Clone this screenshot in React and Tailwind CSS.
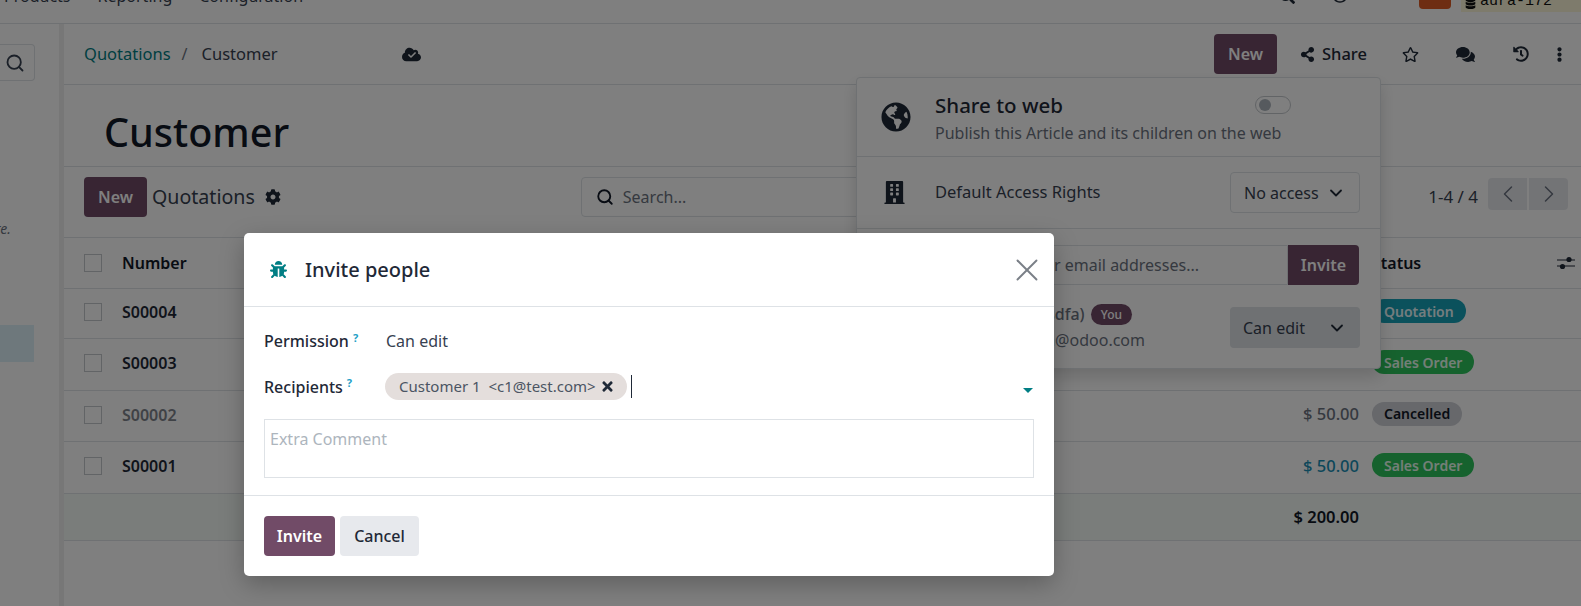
import React from 'react';
import { ChevronDown, ChevronLeft, ChevronRight, Search, X } from 'lucide-react';
import {
  FaBug,
  FaBuilding,
  FaCheck,
  FaCloud,
  FaCog,
  FaComments,
  FaDatabase,
  FaEllipsisV,
  FaGlobeAmericas,
  FaHistory,
  FaRegStar,
  FaSearch,
  FaShareAlt,
  FaTimes,
  FaRegClock,
} from 'react-icons/fa';

const rows = [
  { number: 'S00004', amount: '', status: 'Quotation', badge: 'bg-[#17a2b8] text-[#e8fbff]', height: 'h-[50px]' },
  { number: 'S00003', amount: '', status: 'Sales Order', badge: 'bg-[#2dc45c] text-[#e8fff0]', height: 'h-[52px]' },
  { number: 'S00002', amount: '$ 50.00', status: 'Cancelled', badge: 'bg-[#ced0d6] text-[#111827]', height: 'h-[51px]', muted: true },
  { number: 'S00001', amount: '$ 50.00', status: 'Sales Order', badge: 'bg-[#2dc45c] text-[#e8fff0]', height: 'h-[52px]', info: true },
];

const Checkbox = () => <div className="w-[18px] h-[18px] border border-[#c4c8cc] bg-white" />;

const Hint = () => <sup className="ml-1 text-[11px] font-bold text-[#1f9fc7]">?</sup>;

const SettingsAdjust = () => (
  <svg width="18" height="14" viewBox="0 0 18 14" className="text-[#1f2937]">
    <path d="M0 4h18M0 10h18" stroke="currentColor" strokeWidth="1.2" />
    <circle cx="12" cy="3.5" r="2.6" fill="currentColor" />
    <circle cx="5.5" cy="10.5" r="2.6" fill="currentColor" />
  </svg>
);

const TopBar = () => (
  <div className="h-6 shrink-0 border-b border-[#dee2e6] flex items-end overflow-hidden text-[#374151]">
    <div className="flex gap-[27px] pl-1 pb-[15px]">
      <span>Products</span>
      <span>Reporting</span>
      <span>Configuration</span>
    </div>
    <div className="ml-auto flex items-start self-start h-[20px] -mt-[10px]">
      <FaSearch className="mt-[-2px] mr-[37px] text-[16px] text-[#1f2937]" />
      <FaRegClock className="mt-[-3px] mr-[37px] text-[16px] text-[#1f2937]" />
      <FaComments className="mt-[-5px] mr-[17px] text-[17px] text-[#6b7280]" />
      <div className="w-8 h-[19px] bg-[#dc5a24] rounded-b mr-[10px]" />
      <div className="w-[120px] h-[22px] bg-[#fcf6d8] flex items-end pl-1 gap-1 font-['Liberation_Mono',monospace] text-[15px] leading-[20px] text-[#111]">
        <FaDatabase className="text-[11px] mb-[3px]" />
        <span>aura-172</span>
      </div>
    </div>
  </div>
);

const Sidebar = () => (
  <aside className="relative w-[64px] shrink-0 border-r-[5px] border-[#eeeeee] pt-[20px]">
    <div className="h-[37px] w-[35px] border border-[#dee2e6] border-l-0 rounded-r flex items-center justify-end pr-[9px]">
      <Search size={20} strokeWidth={2.2} className="text-[#374151]" />
    </div>
    <div className="mt-[138px] h-5 text-sm italic text-[#6b7280] leading-5 -ml-[5px]">re.</div>
    <div className="mt-[86px] h-[37px] w-[34px] bg-[#dcf1f8]" />
  </aside>
);

const Header = () => (
  <div className="h-[61px] shrink-0 border-b border-[#dee2e6] flex items-center pl-[20px] pr-[14px]">
    <span className="text-[#017e84] text-[16.5px]">Quotations</span>
    <span className="mx-[11px] text-[#6b7280]">/</span>
    <span className="text-[#374151] ml-[3px] text-[16.5px]">Customer</span>
    <div className="relative ml-[124px] text-[#1f2937] text-[19px]">
      <FaCloud />
      <FaCheck className="absolute left-[6px] top-[6px] text-[8px] text-white" />
    </div>
    <div className="ml-auto flex items-center text-[#1f2937]">
      <button className="h-10 w-[63px] rounded bg-[#714b67] font-semibold text-white">New</button>
      <FaShareAlt className="ml-[23px] text-[15px]" />
      <span className="ml-[7px] font-medium text-[16.5px]">Share</span>
      <FaRegStar className="ml-[35px] text-[17px]" />
      <FaComments className="ml-[37px] text-[19px]" />
      <FaHistory className="ml-[38px] text-[16px]" />
      <FaEllipsisV className="ml-[23px] text-[15px]" />
    </div>
  </div>
);

const ControlPanel = () => (
  <div className="h-[71px] shrink-0 border-b border-[#dee2e6] flex items-center pl-[20px] pr-[13px] pb-[10px]">
    <button className="h-10 w-[63px] rounded bg-[#714b67] font-semibold text-white">New</button>
    <span className="ml-[5px] text-[19.6px] text-[#374151]">Quotations</span>
    <FaCog className="ml-[10px] text-[16px] text-[#1f2937]" />
    <div className="ml-[300px] h-10 w-[640px] border border-[#dee2e6] rounded flex items-center pl-[14px] text-[#6b7280]">
      <Search size={18} strokeWidth={2.5} className="text-[#111827]" />
      <span className="ml-[9px]">Search...</span>
    </div>
    <span className="ml-auto text-[17px] text-[#374151]">1-4 / 4</span>
    <div className="ml-[10px] flex gap-[2px] self-start mt-[11px]">
      <div className="w-[39px] h-8 rounded-l bg-[#e7e9ed] flex items-center justify-center text-[#6b7280]">
        <ChevronLeft size={28} strokeWidth={1.3} />
      </div>
      <div className="w-[39px] h-8 rounded-r bg-[#e7e9ed] flex items-center justify-center text-[#6b7280]">
        <ChevronRight size={28} strokeWidth={1.3} />
      </div>
    </div>
  </div>
);

const QuotationTable = () => (
  <div className="flex flex-col">
    <div className="h-[51px] border-b border-[#dee2e6] flex items-center pl-[20px] font-semibold text-[#111827]">
      <Checkbox />
      <span className="ml-[20px]">Number</span>
      <div className="ml-auto w-[209px] pr-[6px] flex items-center justify-between">
        <span>Status</span>
        <SettingsAdjust />
      </div>
    </div>
    {rows.map((row) => (
      <div key={row.number} className={`${row.height} border-b border-[#dee2e6] flex items-center pl-[20px] pb-[3px] text-[#374151]`}>
        <Checkbox />
        <span className={row.muted ? 'ml-[20px] font-semibold text-[#7f848c]' : 'ml-[20px] font-semibold text-[#1f2937]'}>
          {row.number}
        </span>
        <span className={row.info ? 'ml-auto mr-[13px] font-medium text-[16.5px] text-[#1a8fb5]' : 'ml-auto mr-[13px] text-[16.5px] text-[#6b7280] font-medium'}>
          {row.amount}
        </span>
        <div className="w-[209px] shrink-0 flex">
          <span className={`inline-flex h-6 -translate-y-px items-center rounded-full px-3 text-[14px] font-semibold ${row.badge}`}>
            {row.status}
          </span>
        </div>
      </div>
    ))}
    <div className="h-[47px] border-b border-[#dee2e6] bg-[#f5faf6] flex items-center justify-end pr-[222px] text-[16.5px] font-semibold text-[#111827]">
      $ 200.00
    </div>
  </div>
);

const SharePopover = () => (
  <div className="absolute left-[856px] top-[77px] w-[525px] h-[292px] border border-[#dee2e6] rounded bg-white shadow-[0_8px_16px_rgba(0,0,0,0.15)] flex flex-col text-[#374151]">
    <div className="h-[79px] border-b border-[#dee2e6] flex items-center pl-6 relative">
      <FaGlobeAmericas className="text-[30px] text-[#1f2937]" />
      <div className="ml-[24px] mt-[3px]">
        <div className="text-[20.5px] leading-[26px] font-medium text-[#1f2937]">Share to web</div>
        <div className="text-[#6b7280] leading-[24px] mt-[3px]">Publish this Article and its children on the web</div>
      </div>
      <div className="absolute left-[398px] top-[18px] w-[36px] h-[18px] rounded-full border border-[#c4c8cc] flex items-center pl-[3px]">
        <div className="w-3 h-3 rounded-full bg-[#adb5bd]" />
      </div>
    </div>
    <div className="h-[72px] border-b border-[#dee2e6] flex items-center pl-[26px]">
      <FaBuilding className="text-[23px] text-[#1f2937]" />
      <span className="ml-[29px] text-[16.5px]">Default Access Rights</span>
      <div className="ml-auto mr-[20px] w-[130px] h-[41px] border border-[#dee2e6] rounded flex items-center justify-between px-[13px]">
        <span>No access</span>
        <ChevronDown size={20} strokeWidth={2.2} className="text-[#1f2937]" />
      </div>
    </div>
    <div className="flex-1 pl-[70px] pr-[20px] pt-[16px]">
      <div className="flex h-10 mr-px">
        <div className="flex-1 border border-[#dee2e6] rounded-l flex items-center pl-3 text-[#6b7280] whitespace-nowrap overflow-hidden justify-end pr-[88px]">
          Enter your email addresses...
        </div>
        <button className="w-[71px] rounded-r bg-[#714b67] font-semibold text-white">Invite</button>
      </div>
      <div className="flex items-start mt-[17px]">
        <div className="flex-1 text-right">
          <div className="font-medium text-[#6b7280] leading-6 pr-[98px]">
            Admin (asdfa) <span className="ml-[2px] inline-flex h-[21px] mt-[2px] items-center rounded-full bg-[#714b67] px-[10px] text-xs text-white align-top">You</span>
          </div>
          <div className="text-[#6b7280] leading-6 mt-[2px] pr-[85px]">admin@odoo.com</div>
        </div>
        <div className="w-[130px] h-[41px] rounded bg-[#dee2e6] flex items-center justify-between pl-[13px] pr-[13px] mt-[5px]">
          <span>Can edit</span>
          <ChevronDown size={20} strokeWidth={2.2} className="text-[#1f2937]" />
        </div>
      </div>
    </div>
  </div>
);

const InviteDialog = () => (
  <div className="absolute inset-0 bg-black/50 pl-[244px] pt-[233px]">
    <div className="w-[810px] h-[343px] bg-white rounded-[5px] shadow-[0_8px_24px_rgba(0,0,0,0.25)] flex flex-col text-[#374151]">
      <div className="h-[74px] shrink-0 border-b border-[#dee2e6] flex items-center pl-[26px] pr-[8px]">
        <FaBug className="text-[17px] text-[#017e84]" />
        <h4 className="ml-[18px] pt-px text-[20px] font-medium text-[#1f2937]">Invite people</h4>
        <X size={38} strokeWidth={1.2} className="ml-auto text-[#7a7f87]" />
      </div>
      <div className="flex-1 pl-[20px] pr-[20px]">
        <div className="flex items-center h-[24px] mt-[22px]">
          <span className="w-[122px] font-medium text-[#1f2937]">Permission<Hint /></span>
          <span>Can edit</span>
        </div>
        <div className="relative flex items-center mt-[20px] h-[27px]">
          <span className="w-[121px] font-medium text-[#1f2937]">Recipients<Hint /></span>
          <span className="h-[27px] w-[242px] rounded-full bg-[#e4dedc] flex items-center pl-[14px] text-[15px] text-[#4b5563] whitespace-nowrap">
            Customer 1&nbsp; &lt;c1@test.com&gt;
            <FaTimes className="ml-[4px] text-[15px] text-[#1f2937]" />
          </span>
          <span className="ml-1 h-[23px] w-px bg-[#1f2937]" />
          <span className="ml-auto mr-[1px] mt-[8px] border-x-[5px] border-t-[5px] border-x-transparent border-t-[#017e84]" />
        </div>
        <div className="mt-[19px] h-[59px] border border-[#dee2e6] pl-[5px] pt-[7px] text-[#adb5bd] leading-[24px]">
          Extra Comment
        </div>
      </div>
      <div className="h-[81px] shrink-0 border-t border-[#dee2e6] flex items-center pl-[20px] gap-[5px]">
        <button className="h-10 w-[71px] rounded bg-[#714b67] font-semibold text-white">Invite</button>
        <button className="h-10 w-[79px] rounded bg-[#e7e9ed] font-medium text-[#1f2937]">Cancel</button>
      </div>
    </div>
  </div>
);

const App = () => {
  return (
    <div className="relative w-[1581px] h-[606px] overflow-hidden bg-white font-['Noto_Sans',sans-serif] text-base">
      <div className="h-full flex flex-col">
        <TopBar />
        <div className="flex-1 flex min-h-0">
          <Sidebar />
          <main className="flex-1 flex flex-col min-w-0">
            <Header />
            <div className="h-[82px] shrink-0 border-b border-[#dee2e6] flex items-center pl-[40px] pt-[15px] text-[39.5px] font-medium text-[#111827]">
              Customer
            </div>
            <ControlPanel />
            <QuotationTable />
          </main>
        </div>
      </div>
      <SharePopover />
      <InviteDialog />
    </div>
  );
};

export default App;
